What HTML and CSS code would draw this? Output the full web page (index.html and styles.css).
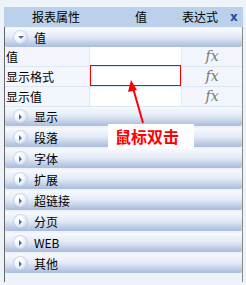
FILE: index.html
```html
<!DOCTYPE html>
<html lang="zh">
<head>
<meta charset="UTF-8">
<title>报表属性</title>
<link rel="stylesheet" href="styles.css">
</head>
<body>
<div class="panel">
	<div class="head">
		<span class="h-name">报表属性</span>
		<span class="h-val">值</span>
		<span class="h-exp">表达式</span>
		<span class="close">x</span>
	</div>
	<div class="body">
		<div class="group open"><i class="ico"></i>值</div>
		<div class="row">
			<span class="name">值</span><span class="val"></span><span class="fx">fx</span>
		</div>
		<div class="row">
			<span class="name">显示格式</span><span class="val edit"></span><span class="fx">fx</span>
		</div>
		<div class="row">
			<span class="name">显示值</span><span class="val"></span><span class="fx">fx</span>
		</div>
		<div class="group"><i class="ico"></i>显示</div>
		<div class="group"><i class="ico"></i>段落</div>
		<div class="group"><i class="ico"></i>字体</div>
		<div class="group"><i class="ico"></i>扩展</div>
		<div class="group"><i class="ico"></i>超链接</div>
		<div class="group"><i class="ico"></i>分页</div>
		<div class="group"><i class="ico"></i>WEB</div>
		<div class="group"><i class="ico"></i>其他</div>
	</div>
</div>
<svg class="arrow" width="246" height="285" viewBox="0 0 246 285">
	<line x1="143" y1="123" x2="133" y2="88" stroke="#f00" stroke-width="2"/>
	<polygon points="131,80 128,92 137,90" fill="#f00"/>
</svg>
<div class="tip">鼠标双击</div>
</body>
</html>
```
FILE: styles.css
```css
body {
	margin: 0;
	background: #eef3fa;
	font: 12px/20px "Noto Sans CJK SC", "DejaVu Sans", sans-serif;
	color: #000;
}
.panel {
	margin: 7px 3px 0 4px;
}
.head {
	display: flex;
	height: 20px;
	line-height: 20px;
	background: #bbd0ea;
}
.h-name {
	width: 102px;
	padding-left: 28px;
	box-sizing: border-box;
}
.h-val {
	width: 76px;
	padding-left: 29px;
	box-sizing: border-box;
}
.h-exp {
	width: 48px;
}
.close {
	color: #1d4fa0;
	font: bold 12px/20px "DejaVu Sans", sans-serif;
}
.body {
	border-left: 1px solid #666;
	border-right: 1px solid #8a8a8a;
	padding-top: 1px;
	height: 254px;
}
.group {
	display: flex;
	align-items: center;
	height: 19px;
	margin-bottom: 2px;
	border-radius: 0 0 2px 2px;
	background: linear-gradient(#f7f9fd, #e4ebf6 45%, #a9bcdc);
	font-size: 12px;
}
.group.open {
	margin-bottom: 0;
}
.ico {
	position: relative;
	width: 13px;
	height: 13px;
	margin: 0 7px 0 9px;
	border-radius: 50%;
	background: radial-gradient(circle at 40% 35%, #ffffff 25%, #e3ebf6 55%, #a3b8d8);
	box-shadow: 0 0 0 1px rgba(170, 190, 220, 0.5);
}
.ico:after {
	content: "";
	position: absolute;
	left: 5px;
	top: 4px;
	border-left: 3px solid #4a6fa8;
	border-top: 3px solid transparent;
	border-bottom: 3px solid transparent;
}
.group.open .ico:after {
	left: 4px;
	top: 5px;
	border-top: 3px solid #4a6fa8;
	border-left: 3px solid transparent;
	border-right: 3px solid transparent;
	border-bottom: 0;
}
.row {
	display: grid;
	grid-template-columns: 85px 91px 1fr;
	height: 20px;
}
.row span {
	height: 19px;
	border-bottom: 1px solid #dce7f2;
	line-height: 19px;
}
.name {
	padding-left: 1px;
	background: #f3f7fd;
	border-right: 1px solid #dce7f2;
}
.val {
	background: #fff;
}
.edit {
	position: relative;
}
.edit:after {
	content: "";
	position: absolute;
	left: 0;
	top: -2px;
	right: 0;
	height: 19px;
	border: 1px solid #e00;
}
.fx {
	background: #f2f6fc;
	color: #777;
	text-align: center;
	font: italic 14px/19px "DejaVu Serif", serif;
	border-left: 1px solid #e4ecf5;
}
.row:last-of-type span {
	border-bottom: 0;
}
.arrow {
	position: absolute;
	left: 0;
	top: 0;
}
.tip {
	position: absolute;
	left: 108px;
	top: 124px;
	width: 86px;
	height: 25px;
	background: #fff;
	color: #f00;
	font: bold 16px/25px "Noto Sans CJK SC", sans-serif;
	padding-left: 7px;
	box-sizing: border-box;
}
```
